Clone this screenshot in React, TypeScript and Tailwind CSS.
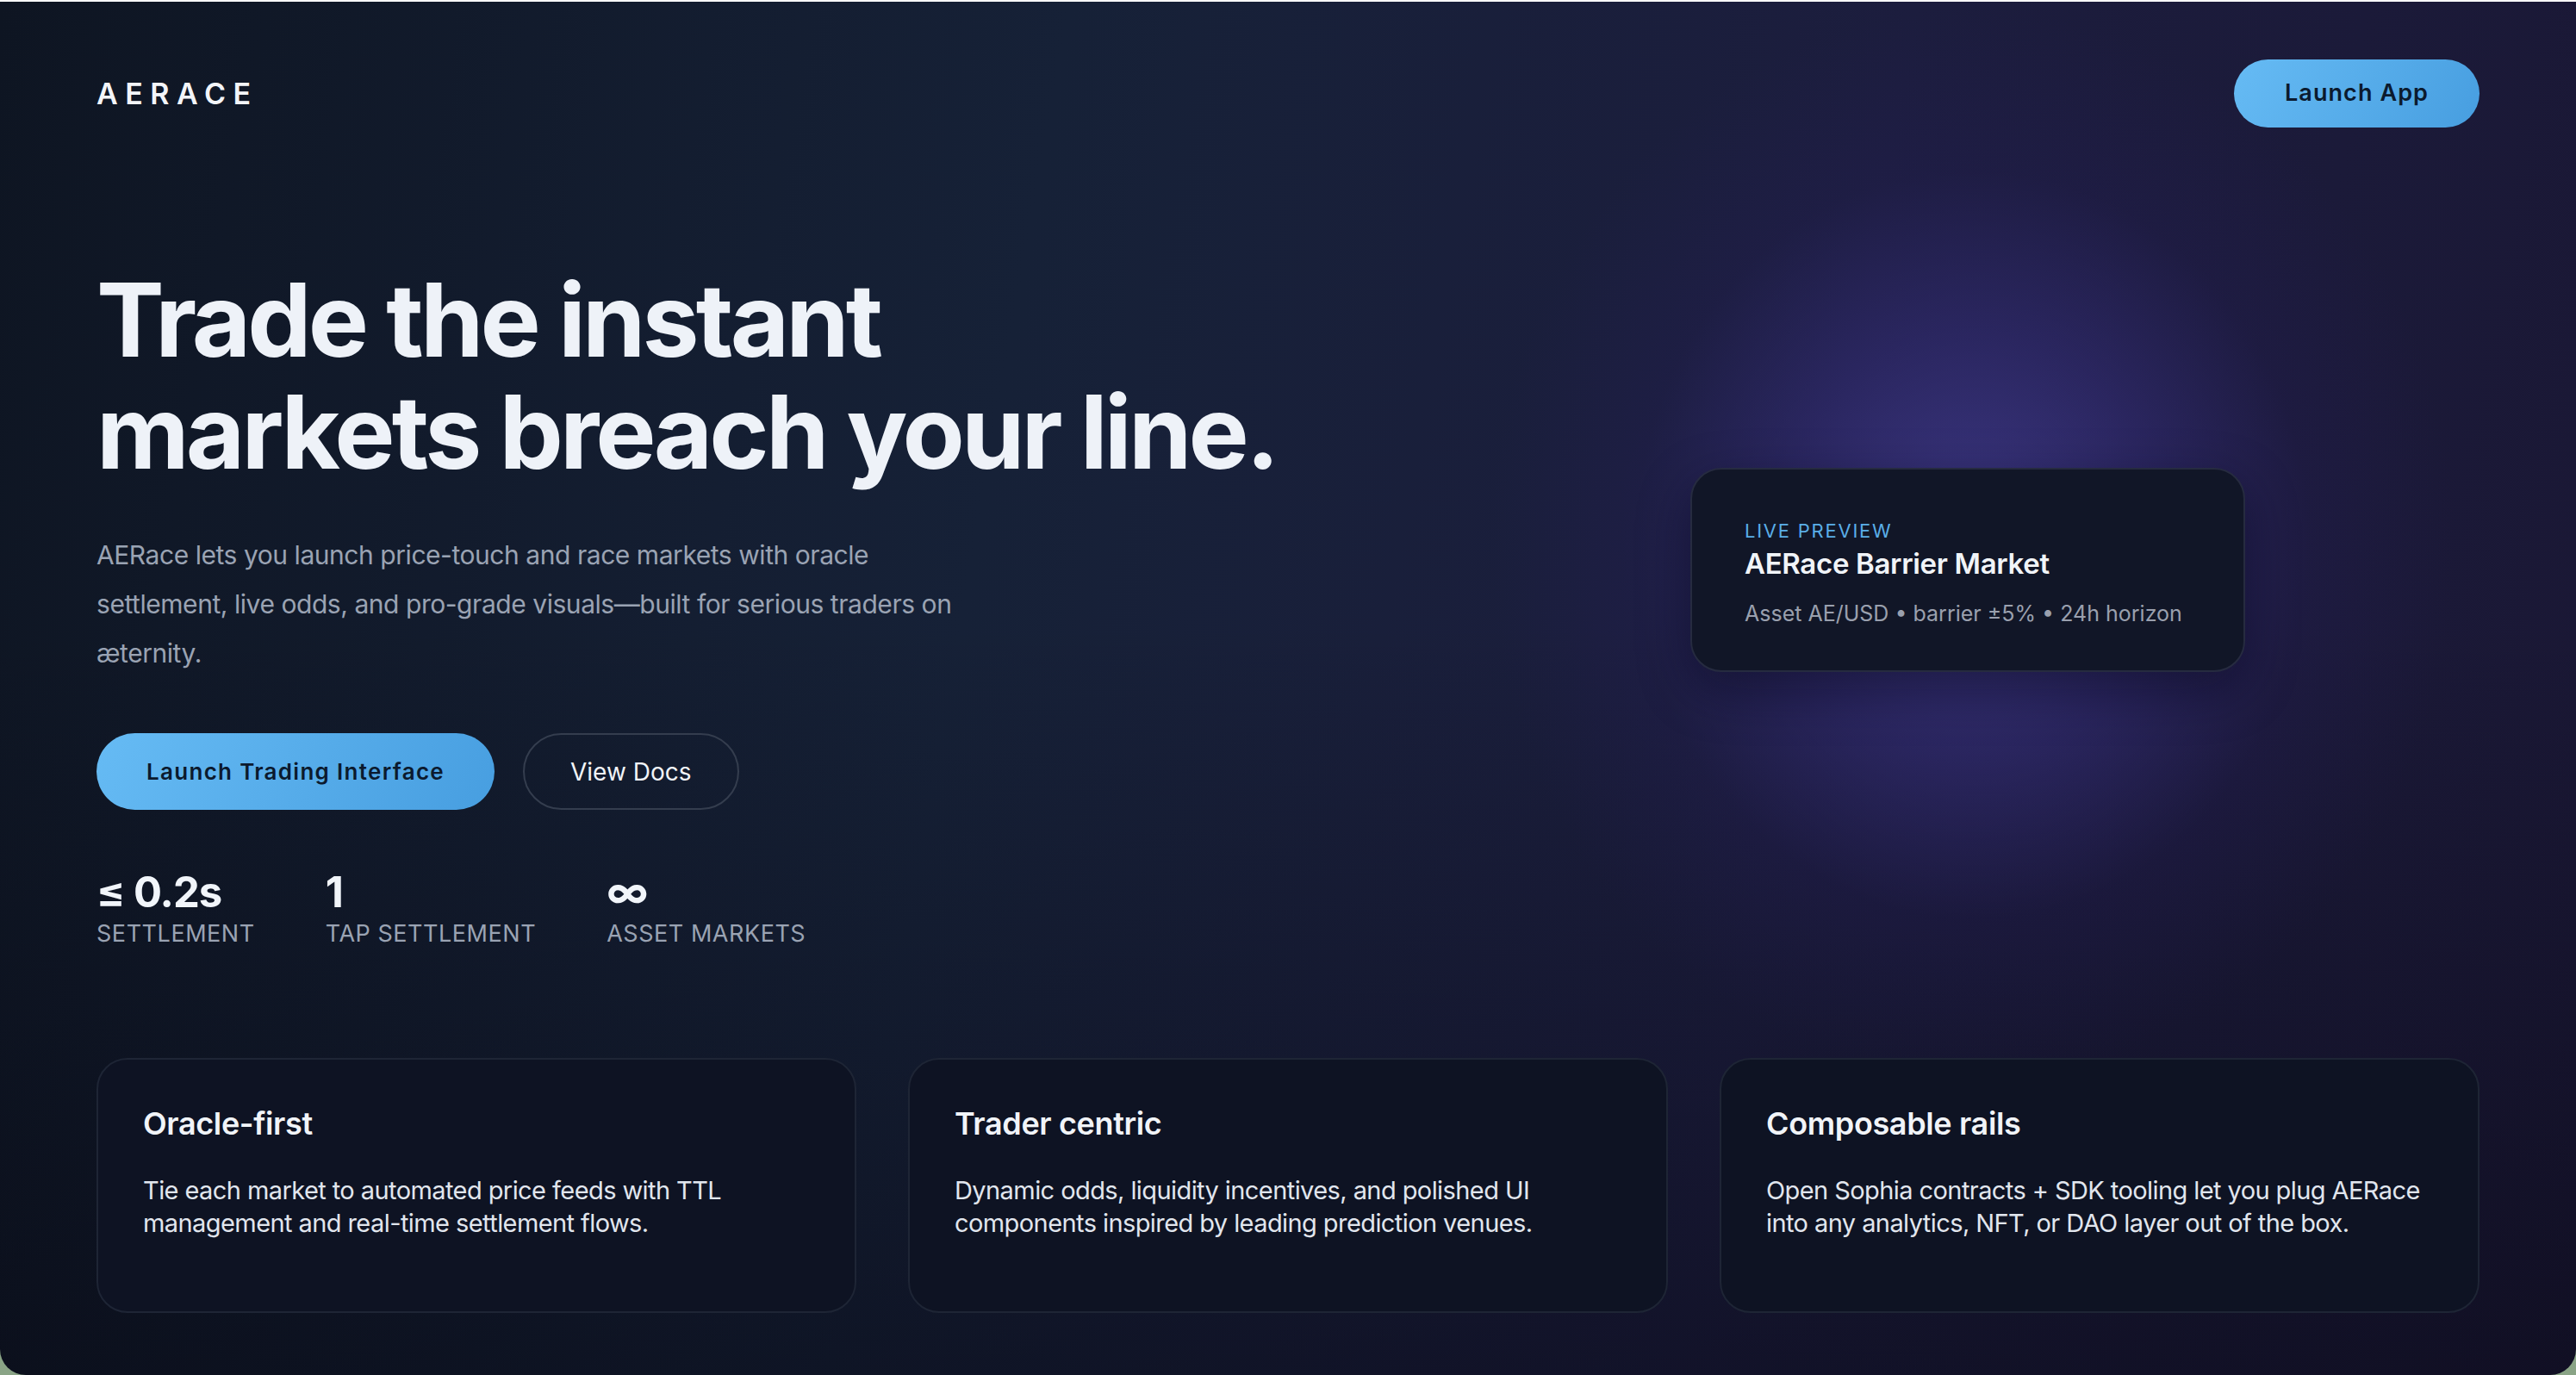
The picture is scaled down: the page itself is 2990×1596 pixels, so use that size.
import React from "react";

const features = [
  {
    title: "Oracle-first",
    body: "Tie each market to automated price feeds with TTL management and real-time settlement flows.",
  },
  {
    title: "Trader centric",
    body: "Dynamic odds, liquidity incentives, and polished UI components inspired by leading prediction venues.",
  },
  {
    title: "Composable rails",
    body: "Open Sophia contracts + SDK tooling let you plug AERace into any analytics, NFT, or DAO layer out of the box.",
  },
];

const stats = [
  { value: "≤ 0.2s", label: "Settlement" },
  { value: "1", label: "Tap settlement" },
  { value: "∞", label: "Asset markets" },
];

function App() {
  return (
    <div className="w-full h-[1596px] bg-[linear-gradient(180deg,#e6e6e6_0px,#e6e6e6_2px,#5f8a7c_2px,#8aa486_100%)] font-[Inter,sans-serif]">
      <div className="relative h-[1594px] mt-[2px] overflow-hidden rounded-b-[30px] bg-[radial-gradient(ellipse_560px_620px_at_2289px_630px,rgba(64,58,140,0.9)_0%,rgba(54,46,124,0.55)_40%,rgba(40,30,95,0.2)_70%,transparent_100%),linear-gradient(180deg,transparent_45%,rgba(6,6,16,0.45)_100%),linear-gradient(100deg,#0e1522_0%,#162137_38%,#1c1d3e_68%,#1a1734_100%)]">
        {/* header */}
        <header className="flex items-center justify-between px-[112px] pt-[67px]">
          <div className="text-[34px] font-semibold tracking-[0.25em] text-[#f3f5f9] leading-none">AERACE</div>
          <button className="h-[79px] px-[59px] rounded-full bg-[linear-gradient(120deg,#66bbf4,#479ee0)] text-[27px] font-semibold tracking-[0.04em] text-[#0b1a2e]">
            Launch App
          </button>
        </header>

        {/* hero */}
        <section className="flex justify-between px-[112px] mt-[158px]">
          <div className="flex flex-col">
            <h1 className="text-[118px] leading-[130px] font-bold tracking-[-0.033em] text-[#eef2f8]">
              Trade the instant
              <br />
              markets breach your line.
            </h1>
            <p className="mt-[50px] max-w-[1045px] text-[30px] leading-[57px] tracking-[-0.015em] text-[#9aa3b3]">
              AERace lets you launch price-touch and race markets with oracle settlement, live odds, and pro-grade visuals—built for serious traders on æternity.
            </p>
            <div className="flex gap-[33px] mt-[64px]">
              <button className="h-[89px] px-[58px] rounded-full bg-[linear-gradient(120deg,#66bbf4,#479ee0)] text-[26px] font-semibold tracking-[0.05em] text-[#0b1a2e]">
                Launch Trading Interface
              </button>
              <button className="h-[89px] px-[53px] rounded-full border-2 border-[#343d4e] text-[28px] text-[#f1f4f8]">
                View Docs
              </button>
            </div>
            <div className="flex gap-[82px] mt-[66px]">
              {stats.map((s) => (
                <div key={s.label} className="flex flex-col">
                  <div className="text-[49px] leading-[60px] font-bold tracking-[-0.02em] text-[#f1f5fa]">{s.value}</div>
                  <div className="text-[27px] leading-[36px] uppercase tracking-[0.02em] text-[#9aa3b3]">{s.label}</div>
                </div>
              ))}
            </div>
          </div>

          <div className="mt-[237px] mr-[272px]">
            <div className="w-[644px] rounded-[36px] border-2 border-[#262b40] bg-[#111627] pl-[61px] pt-[56px] pb-[48px] shadow-[0_20px_60px_rgba(5,5,20,0.45)]">
              <div className="text-[22px] leading-[30px] tracking-[0.08em] text-[#5aaee8]">LIVE PREVIEW</div>
              <div className="mt-[3px] text-[33px] leading-[40px] font-semibold tracking-[-0.01em] text-[#f1f4f8]">AERace Barrier Market</div>
              <div className="mt-[20px] text-[25px] leading-[36px] text-[#9aa0ae]">Asset AE/USD • barrier ±5% • 24h horizon</div>
            </div>
          </div>
        </section>

        {/* feature cards */}
        <section className="grid grid-cols-3 gap-[60px] px-[112px] mt-[126px]">
          {features.map((f) => (
            <div key={f.title} className="h-[296px] rounded-[36px] border-2 border-[#1e2535] bg-[#0e1323] px-[52px] pt-[52px]">
              <h3 className="text-[36px] leading-[44px] font-semibold tracking-[-0.01em] text-[#f1f4f8]">{f.title}</h3>
              <p className="mt-[37px] text-[29px] leading-[38px] tracking-[-0.02em] text-[#e1e6ee]">{f.body}</p>
            </div>
          ))}
        </section>
      </div>
    </div>
  );
}

export default App;
